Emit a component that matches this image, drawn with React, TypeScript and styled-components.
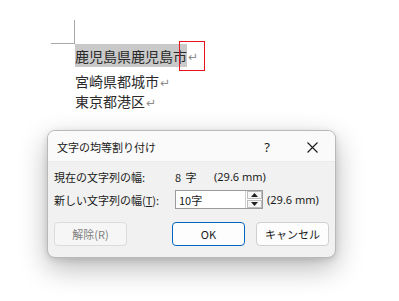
import styled, { createGlobalStyle } from "styled-components";

const Global = createGlobalStyle`
  html, body {
    margin: 0;
    padding: 0;
    background: #ffffff;
  }
  body {
    font-family: "Noto Sans CJK JP", "Noto Sans", sans-serif;
  }
`;

const App = () => {
  return (
    <Page>
      <Global />
      <Doc>
        <CropMark />
        <Lines>
          <Line $first>
            <Marked>鹿児島県鹿児島市</Marked>
            <Ret>↵</Ret>
          </Line>
          <Line>
            宮崎県都城市<Ret>↵</Ret>
          </Line>
          <Line>
            東京都港区<Ret>↵</Ret>
          </Line>
        </Lines>
        <RedBox />
      </Doc>

      <Dialog>
        <TitleBar>
          <Title>文字の均等割り付け</Title>
          <TitleBtn $w={44}>?</TitleBtn>
          <TitleBtn $w={46}>
            <svg width="11" height="11" viewBox="0 0 11 11">
              <path d="M0.5 0.5 L10.5 10.5 M10.5 0.5 L0.5 10.5" stroke="#1a1a1a" strokeWidth="1.1" />
            </svg>
          </TitleBtn>
        </TitleBar>
        <Body>
          <Row>
            <Label>現在の文字列の幅:</Label>
            <Value>8 字</Value>
            <Mm>(29.6 mm)</Mm>
          </Row>
          <Row>
            <Label>
              新しい文字列の幅(<u>T</u>):
            </Label>
            <Spin>
              <Field>10字</Field>
              <Arrows>
                <Arrow>
                  <svg width="7" height="4" viewBox="0 0 7 4">
                    <path d="M0 4 L3.5 0 L7 4 Z" fill="#222" />
                  </svg>
                </Arrow>
                <Arrow>
                  <svg width="7" height="4" viewBox="0 0 7 4">
                    <path d="M0 0 L3.5 4 L7 0 Z" fill="#222" />
                  </svg>
                </Arrow>
              </Arrows>
            </Spin>
            <MmAfter>(29.6 mm)</MmAfter>
          </Row>
          <Buttons>
            <Button $disabled>解除(R)</Button>
            <Button $primary>OK</Button>
            <Button>キャンセル</Button>
          </Buttons>
        </Body>
      </Dialog>
    </Page>
  );
};

export default App;

const Page = styled.div`
  width: 399px;
  height: 301px;
  overflow: hidden;
  background: #ffffff;
`;

const Doc = styled.div`
  position: relative;
  padding: 20px 0 0 51px;
`;

const CropMark = styled.div`
  width: 23px;
  height: 23px;
  border-right: 1px solid #a8a8a8;
  border-bottom: 1px solid #a8a8a8;
`;

const Lines = styled.div`
  margin-left: 24px;
  font-family: "Noto Sans CJK JP", sans-serif;
  font-size: 14px;
  color: #2a2a2a;
`;

const Line = styled.div<{ $first?: boolean }>`
  display: flex;
  align-items: center;
  height: ${(p) => (p.$first ? "23px" : "20px")};
  margin-bottom: ${(p) => (p.$first ? "4px" : "0")};
  line-height: 1;
`;

const Marked = styled.span`
  display: flex;
  align-items: center;
  height: 23px;
  background: #c9c9c9;
`;

const Ret = styled.span`
  font-family: "DejaVu Sans", sans-serif;
  font-size: 12px;
  color: #8c8c8c;
  margin-left: 1px;
  margin-top: 3px;
`;

const RedBox = styled.div`
  position: absolute;
  left: 179px;
  top: 41px;
  width: 24px;
  height: 28px;
  border: 1px solid #e8141b;
`;

const Dialog = styled.div`
  box-sizing: border-box;
  margin: 19px 0 0 47px;
  width: 289px;
  height: 128px;
  border: 1px solid #b9b9b9;
  border-radius: 8px;
  background: #f1f1f1;
  box-shadow: 0 10px 28px rgba(0, 0, 0, 0.28), 0 2px 6px rgba(0, 0, 0, 0.12);
  overflow: hidden;
  font-family: "Noto Sans CJK JP", "Noto Sans", sans-serif;
  color: #1a1a1a;
`;

const TitleBar = styled.div`
  display: flex;
  align-items: center;
  height: 30px;
  background: #fafafa;
  border-bottom: 1px solid #ececec;
`;

const Title = styled.div`
  flex: 1;
  padding-left: 9px;
  padding-top: 2px;
  font-size: 11px;
`;

const TitleBtn = styled.div<{ $w: number }>`
  width: ${(p) => p.$w}px;
  height: 30px;
  display: flex;
  align-items: center;
  justify-content: center;
  font-family: "Noto Sans", sans-serif;
  font-size: 13px;
  padding-top: 2px;
  box-sizing: border-box;
`;

const Body = styled.div`
  padding: 5px 6px 0 6px;
`;

const Row = styled.div`
  display: flex;
  align-items: center;
  height: 19px;
  font-size: 11px;
  margin-bottom: 4px;
`;

const Label = styled.div`
  width: 121px;
  white-space: nowrap;
`;

const Value = styled.div`
  width: 39px;
  font-family: "Noto Sans CJK JP", sans-serif;
  letter-spacing: 1px;
`;

const Mm = styled.div`
  font-family: "Noto Sans", sans-serif;
`;

const MmAfter = styled(Mm)`
  margin-left: 4px;
`;

const Spin = styled.div`
  display: flex;
  align-items: stretch;
  height: 19px;
  width: 88px;
  box-sizing: border-box;
  border: 1px solid #9a9a9a;
  background: #ffffff;
`;

const Field = styled.div`
  flex: 1;
  display: flex;
  align-items: center;
  padding-left: 3px;
  font-size: 11px;
  border-right: 1px solid #cfcfcf;
  margin-right: 1px;
`;

const Arrows = styled.div`
  display: flex;
  flex-direction: column;
  width: 15px;
  gap: 1px;
`;

const Arrow = styled.div`
  flex: 1;
  display: flex;
  align-items: center;
  justify-content: center;
  border: 1px solid #bdbdbd;
  background: #f6f6f6;
`;

const Buttons = styled.div`
  display: flex;
  margin-top: 13px;
`;

const Button = styled.div<{ $primary?: boolean; $disabled?: boolean }>`
  box-sizing: border-box;
  width: 73px;
  height: 24px;
  display: flex;
  align-items: center;
  justify-content: center;
  font-size: 11px;
  border-radius: 4px;
  background: ${(p) => (p.$disabled ? "#f6f6f6" : "#fdfdfd")};
  color: ${(p) => (p.$disabled ? "#7e7e7e" : "#1a1a1a")};
  border: 1px solid ${(p) => (p.$primary ? "#0067c0" : p.$disabled ? "#dcdcdc" : "#d0d0d0")};
  margin-left: ${(p) => (p.$primary ? "45px" : p.$disabled ? "0" : "11px")};
`;
